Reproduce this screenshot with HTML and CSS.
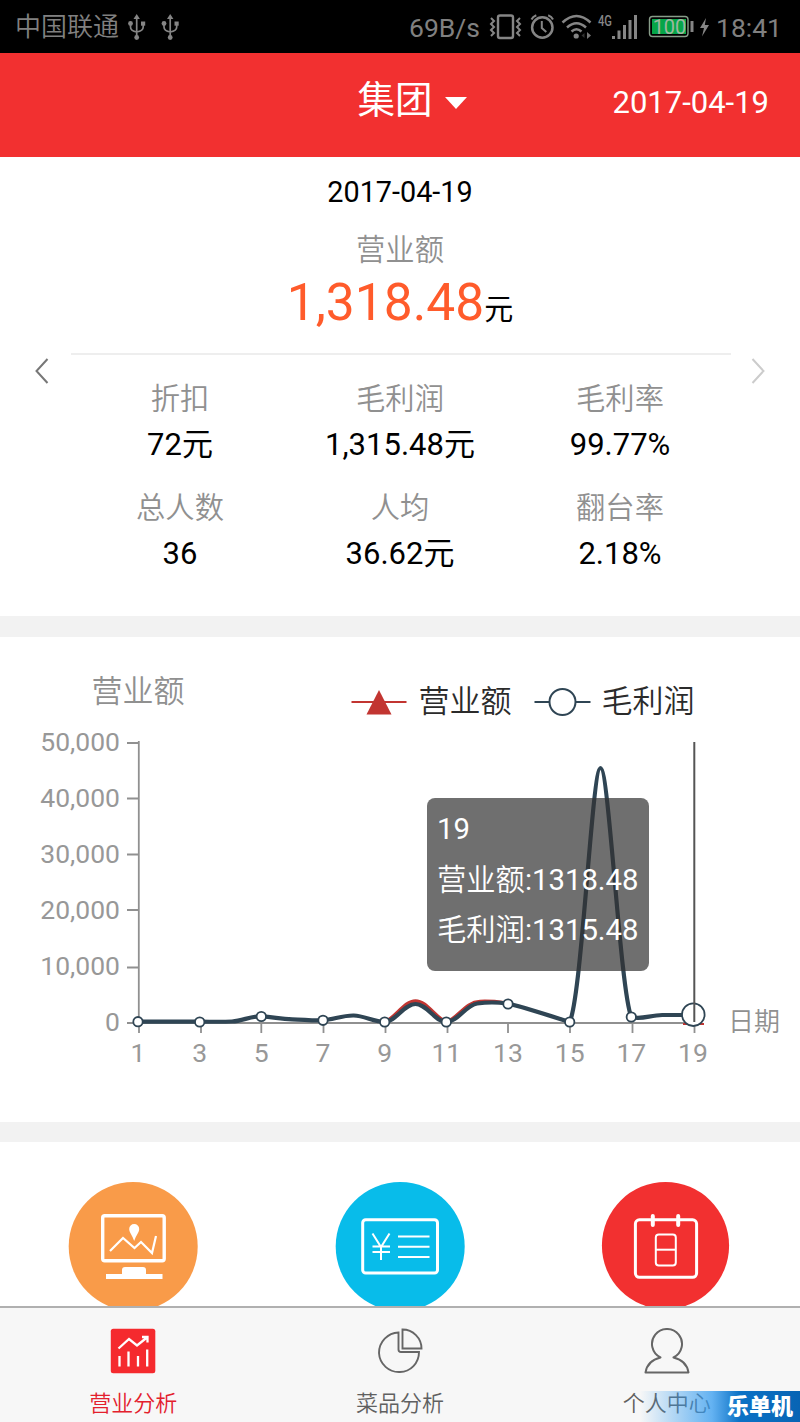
FILE: index.html
```html
<!DOCTYPE html>
<html lang="zh-CN">
<head>
<meta charset="utf-8">
<title>营业分析</title>
<link rel="stylesheet" href="styles.css">
</head>
<body>
<div class="app">
  <div class="status">
    <span class="carrier">中国联通</span>
    <svg class="usb" width="60" height="53" viewBox="126 0 60 53">
      <g id="usb" fill="none" stroke="#858585" stroke-width="1.700">
        <path d="M136.700 18V37M130.500 24v3q0 4 6.200 5M143.200 24v3q0 4-6.500 5"/>
        <path d="M136.700 14l3.200 5h-6.400z" fill="#858585" stroke="none"/>
        <circle cx="130.500" cy="23.500" r="2.400" fill="#858585" stroke="none"/>
        <circle cx="136.700" cy="37.500" r="2.400" fill="#858585" stroke="none"/>
        <path d="M141 21.500h4.200v4.200H141z" fill="#858585" stroke="none"/>
      </g>
      <use href="#usb" x="33.500"/>
    </svg>
    <span class="speed">69B/s</span>
    <svg class="signals" width="226" height="53" viewBox="488 0 226 53">
      <g fill="none" stroke="#858585" stroke-width="2">
        <rect x="498" y="15.500" width="15" height="22.500" rx="2" stroke-width="2.400"/>
        <path d="M491 18l3 3-3 3 3 3-3 3 3 3-3 3M520 18l-3 3 3 3-3 3 3 3-3 3 3 3"/>
        <circle cx="542.300" cy="27.500" r="10.200" stroke-width="2.500"/>
        <path d="M541.800 21v7l4.500 4M531.500 19.500q1.300-3 4.800-4.300M553 19.500q-1.300-3-4.800-4.300"/>
        <path d="M562.500 22.500q14-13 28 0M567 27.500q9.500-8.500 19 0M571.500 31.500q5-4.500 10 0" stroke-width="2.500"/>
      </g>
      <circle cx="576.200" cy="36" r="2.600" fill="#858585"/>
      <path d="M587 32l4 3.500-4 3.500z" fill="#777"/>
      <path d="M584.500 33v5l-3-2.500z" fill="#333"/>
      <text class="net" x="598" y="25.500" textLength="14" lengthAdjust="spacingAndGlyphs">4G</text>
      <path d="M612 36h3v3h-3zM617.500 30.500h3v8.500h-3zM623 25h3v14h-3zM628.500 20h3v19h-3zM634 15h3v24h-3z" fill="#858585"/>
      <rect x="649.500" y="16.500" width="38.500" height="20" rx="3" fill="none" stroke="#889c89" stroke-width="1.400"/>
      <path d="M652 19h34v15h-34z" fill="#06a548"/>
      <path d="M690.500 21h3v11h-3z" fill="#858585"/>
      <text class="battery" x="669.500" y="34" text-anchor="middle">100</text>
      <path d="M706 18l-6 10h4l-2 8.500 7-11.500h-4.200z" fill="#858585"/>
    </svg>
    <span class="clock">18:41</span>
  </div>

  <header class="header">
    <div class="title">集团<i class="caret"></i></div>
    <div class="header-date">2017-04-19</div>
  </header>

  <section class="summary">
    <svg class="arrow" width="14" height="28" viewBox="0 0 14 28"><path d="M12.500 2L1.500 14l11 12" fill="none" stroke="#777" stroke-width="2"/></svg>
    <div class="panel">
      <div class="day">2017-04-19</div>
      <div class="label">营业额</div>
      <div class="amount"><b>1,318.48</b>元</div>
      <div class="rule"></div>
      <div class="stats">
        <div class="stat"><div class="label">折扣</div><div class="value">72元</div></div>
        <div class="stat"><div class="label">毛利润</div><div class="value">1,315.48元</div></div>
        <div class="stat"><div class="label">毛利率</div><div class="value">99.77%</div></div>
        <div class="stat"><div class="label">总人数</div><div class="value">36</div></div>
        <div class="stat"><div class="label">人均</div><div class="value">36.62元</div></div>
        <div class="stat"><div class="label">翻台率</div><div class="value">2.18%</div></div>
      </div>
    </div>
    <svg class="arrow" width="14" height="28" viewBox="0 0 14 28"><path d="M1.500 2l11 12-11 12" fill="none" stroke="#ccc" stroke-width="2"/></svg>
  </section>

  <section class="chart">
    <svg width="800" height="485" viewBox="0 637 800 485">
      <text class="axis-name" x="138" y="702" text-anchor="middle">营业额</text>
      <path d="M351.500 702h55" stroke="#c23531" stroke-width="2"/>
      <path d="M379 690l12.500 24.500h-25z" fill="#c23531"/>
      <text class="legend" x="418.500" y="711.500">营业额</text>
      <path d="M534.500 702h56" stroke="#2f4554" stroke-width="2"/>
      <circle cx="562.500" cy="702" r="13" fill="#fff" stroke="#2f4554" stroke-width="2"/>
      <text class="legend" x="601.500" y="711.500">毛利润</text>

      <path d="M138.800 741v283M127 743h12M127 798.500h12M127 854.500h12M127 910h12M127 967.500h12M127 1023h567M139 1023v10M201 1023v10M261.300 1023v10M323.500 1023v10M385.500 1023v10M447.500 1023v10M508 1023v10M570 1023v10M632.500 1023v10M694.500 1023v10" fill="none" stroke="#909090" stroke-width="1.800"/>
      <g class="tick" text-anchor="end">
        <text x="120" y="751">50,000</text>
        <text x="120" y="807">40,000</text>
        <text x="120" y="863">30,000</text>
        <text x="120" y="919">20,000</text>
        <text x="120" y="975">10,000</text>
        <text x="120" y="1031">0</text>
      </g>
      <g class="tick" text-anchor="middle">
        <text x="138" y="1062">1</text>
        <text x="199.700" y="1062">3</text>
        <text x="261.300" y="1062">5</text>
        <text x="323" y="1062">7</text>
        <text x="384.700" y="1062">9</text>
        <text x="446.300" y="1062">11</text>
        <text x="508" y="1062">13</text>
        <text x="569.700" y="1062">15</text>
        <text x="631.300" y="1062">17</text>
        <text x="693" y="1062">19</text>
      </g>
      <text class="x-name" x="728" y="1031">日期</text>

      <path d="M384.700 1022C396 1018 404 1001 415.500 1001S435 1018 446.300 1022C458 1019 465 1002 480 1001.500S498 1002 508 1003.500" fill="none" stroke="#c23531" stroke-width="3.600"/>
      <path d="M683 1024h21" stroke="#c23531" stroke-width="2"/>
      <path d="M138 1021.700H199.700C212 1021.700 222 1022 232 1021.500C243 1021 250 1016 261.300 1016.300C274 1017 280 1019 292.200 1019.300S313 1021 323 1020.300S343 1015.200 353.800 1015.500S374 1022 384.700 1022S404 1004 415.500 1004S435 1022 446.300 1022S466 1005 477.200 1003.500S500 1002.500 508 1003.700S560 1019 569.700 1022C582 995 592 768 600.500 768C609 768 620 990 631.300 1017C641 1020 650 1015.200 662.200 1015H693" fill="none" stroke="#2f4554" stroke-width="4.200" stroke-linejoin="round"/>
      <g fill="#fff" stroke="#2f4554" stroke-width="1.800">
        <circle cx="138" cy="1021.700" r="4.700"/>
        <circle cx="199.700" cy="1022" r="4.700"/>
        <circle cx="261.300" cy="1016.500" r="4.700"/>
        <circle cx="323" cy="1020.300" r="4.700"/>
        <circle cx="384.700" cy="1022" r="4.700"/>
        <circle cx="446.300" cy="1022" r="4.700"/>
        <circle cx="508" cy="1004" r="4.700"/>
        <circle cx="569.700" cy="1022" r="4.700"/>
        <circle cx="631.300" cy="1017" r="4.700"/>
        <circle cx="693.300" cy="1014.700" r="11.300"/>
      </g>
      <path d="M694.300 742v280" stroke="#555" stroke-width="2"/>
    </svg>
    <div class="tooltip">19<br><span>营业额</span>:1318.48<br><span>毛利润</span>:1315.48</div>
  </section>

  <section class="shortcuts">
    <svg class="shortcut" width="130" height="130" viewBox="68 1181 130 130">
      <circle cx="133.200" cy="1246.500" r="64.500" fill="#f99b49"/>
      <rect x="102.700" y="1215.700" width="61.500" height="45" rx="2" fill="none" stroke="#fff" stroke-width="3.400"/>
      <path d="M110 1251l13-13 11.500 10 6.500-6 11 11 4-17" fill="none" stroke="#fff" stroke-width="2.200"/>
      <path d="M134.200 1241c-2-6-5-8.500-5-12a5 5 0 0 1 10 0c0 3.500-3 6-5 12z" fill="#fff"/>
      <path d="M106 1274h16v-4q0-3 3-3h18q3 0 3 3v4h16.500v5H106z" fill="#fff"/>
    </svg>
    <svg class="shortcut" width="130" height="130" viewBox="335 1181 130 130">
      <circle cx="400.200" cy="1246.500" r="64.500" fill="#08bcea"/>
      <rect x="362.700" y="1219.700" width="74.800" height="53.300" rx="3" fill="none" stroke="#fff" stroke-width="3"/>
      <path d="M372.500 1233.500l8.500 13.500 8.500-13.500M381 1247v13M372.500 1246.500h17.500M372.500 1252h17.500M398 1236.500h31.500M398 1246.700h31.500M398 1257h31.500" fill="none" stroke="#fff" stroke-width="2"/>
    </svg>
    <svg class="shortcut" width="130" height="130" viewBox="601 1181 130 130">
      <circle cx="665.500" cy="1245.600" r="63.600" fill="#f23030"/>
      <rect x="635.400" y="1219.800" width="61.200" height="57.500" rx="4" fill="none" stroke="#fff" stroke-width="3"/>
      <path d="M652.800 1216v9M678.200 1216v9" stroke="#fff" stroke-width="4" stroke-linecap="round"/>
      <rect x="655.800" y="1234.500" width="20" height="31" rx="3" fill="none" stroke="#fff" stroke-width="2"/>
      <path d="M656 1249.700h20" stroke="#fff" stroke-width="2"/>
    </svg>
  </section>

  <nav class="tabs">
    <div class="tab active">
      <svg width="46" height="46" viewBox="0 0 46 46">
        <rect x=".8" y=".8" width="44.500" height="44.500" rx="2.500" fill="#f52a2e"/>
        <path d="M8.500 20.500l10.500-9.500 8 6.500L37 9.500M32 9h5.500v5.500M9.500 28v10.500M18.500 23.500v15M28 28v10.500M37.200 21.500v17" fill="none" stroke="#fff" stroke-width="2.300"/>
      </svg>
      <span>营业分析</span>
    </div>
    <div class="tab">
      <svg width="46" height="46" viewBox="0 0 46 46">
        <path d="M21.500 4.500A20 20 0 1 0 42 24H24q-2.500 0-2.500-2.500zM25.500 1.500V20.500H44.500A19 19 0 0 0 25.500 1.500z" fill="none" stroke="#666" stroke-width="1.900"/>
      </svg>
      <span>菜品分析</span>
    </div>
    <div class="tab">
      <svg width="46" height="46" viewBox="0 0 46 46">
        <path d="M16.500 29.500a15 15 0 1 1 13 0Q42.500 32.500 44.500 44.500H1.500Q3.500 32.500 16.500 29.500z" fill="none" stroke="#666" stroke-width="2" stroke-linejoin="round"/>
      </svg>
      <span>个人中心</span>
    </div>
    <div class="mark">乐单机</div>
  </nav>
</div>
</body>
</html>
```
FILE: styles.css
```css
* { box-sizing: border-box; }

body {
  margin: 0;
  background: #f2f2f2;
  font-family: Roboto, "Noto Sans CJK SC", sans-serif;
  color: #000;
}

svg { display: block; flex: none; }

.app {
  width: 800px;
  height: 1422px;
  display: flex;
  flex-direction: column;
  overflow: hidden;
}

.status {
  height: 53px;
  flex: none;
  background: #000;
  display: flex;
  align-items: center;
  padding: 1px 18px 0 15px;
  color: #808080;
  font-size: 27px;
  line-height: 53px;
  white-space: nowrap;
}
.usb, .signals { margin-top: -1px; }
.carrier { font-size: 26px; font-weight: 350; width: 111px; }
.speed { margin-left: auto; width: 72px; font-size: 26.500px; }
.signals { margin-left: 7px; }
.clock { width: 68px; text-align: right; font-size: 26.500px; }
.net { font-size: 14.500px; fill: #858585; font-weight: 500; }
.battery { font-size: 20px; fill: #9db8a0; font-weight: 400; }

.header {
  height: 104px;
  flex: none;
  background: #f23030;
  color: #fff;
  display: grid;
  grid-template-columns: 1fr auto 1fr;
  align-items: center;
  padding: 0 31px 10px;
}
.title {
  grid-column: 2;
  display: flex;
  align-items: center;
  gap: 12px;
  margin-left: 24px;
  font-size: 37.500px;
  line-height: 44px;
}
.caret {
  border: 11px solid transparent;
  border-top: 12px solid #fff;
  border-bottom: 0;
  margin-top: 6px;
}
.header-date {
  justify-self: end;
  padding-top: 6px;
  font-size: 31px;
  line-height: 40px;
}

.summary {
  height: 459px;
  flex: none;
  background: #fff;
  display: flex;
  justify-content: space-between;
  padding: 0 35px;
}
.arrow { margin-top: 200px; }
.panel {
  width: 660px;
  padding-top: 17px;
  text-align: center;
  line-height: 36px;
}
.day { font-size: 28.800px; }
.label { font-size: 29.300px; font-weight: 350; color: #909090; }
.day + .label { margin-top: 22px; }
.amount { height: 60px; margin-top: 5px; font-size: 29px; line-height: 60px; }
.amount b { font-size: 51.500px; font-weight: 400; color: #ff5b2b; }
.rule { height: 2px; margin: 20px -1px 0 1px; background: #eee; }
.stats {
  display: grid;
  grid-template-columns: repeat(3, 1fr);
  row-gap: 27px;
  margin-top: 26px;
}
.value { margin-top: 10px; font-size: 31px; }

.chart {
  position: relative;
  height: 485px;
  flex: none;
  margin-top: 21px;
  background: #fff;
}
.axis-name { font-size: 31px; font-weight: 350; fill: #909090; }
.legend { font-size: 31px; font-weight: 350; fill: #2b2b2b; }
.tick { font-size: 26.500px; fill: #989898; }
.x-name { font-size: 26px; font-weight: 350; fill: #909090; }
.tooltip {
  position: absolute;
  left: 427px;
  top: 161px;
  width: 222px;
  height: 173px;
  padding: 6px 11px 6px 10px;
  border-radius: 8px;
  background: rgba(50, 50, 50, .7);
  color: #fff;
  font-size: 29.300px;
  line-height: 50.500px;
  white-space: nowrap;
}
.tooltip span { font-weight: 350; }

.shortcuts {
  height: 164px;
  flex: none;
  margin-top: 20px;
  padding: 39px 69px 0 68px;
  display: flex;
  justify-content: space-between;
  overflow: hidden;
  background: #fff;
}

.tabs {
  position: relative;
  height: 116px;
  flex: none;
  display: grid;
  grid-template-columns: repeat(3, 1fr);
  border-top: 2px solid #b0b0b0;
  background: #f7f7f7;
}
.tab {
  display: flex;
  flex-direction: column;
  align-items: center;
  padding-top: 20px;
  color: #606060;
  font-size: 22px;
  font-weight: 350;
  line-height: 30px;
}
.tab span { margin-top: 15px; }
.active { color: #e3202d; }
.mark {
  position: absolute;
  right: 0;
  bottom: 0;
  width: 160px;
  height: 31px;
  padding-right: 7px;
  background: linear-gradient(90deg, rgba(50, 155, 240, 0), rgba(50, 155, 240, .75) 45%, #0c72c6 62%, #0864b4);
  color: #fff;
  font-size: 22px;
  font-weight: 900;
  line-height: 32px;
  text-align: right;
}
```
